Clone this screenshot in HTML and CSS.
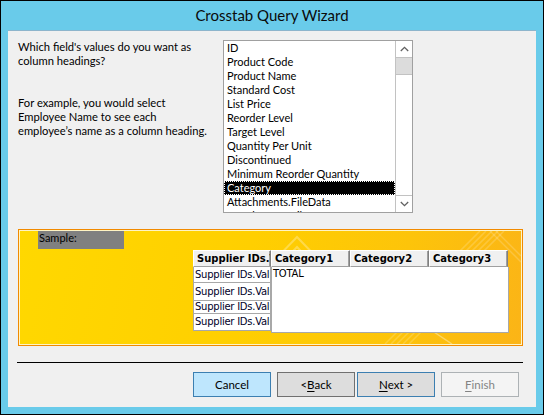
FILE: index.html
```html
<!DOCTYPE html>
<html>
<head>
<meta charset="utf-8">
<title>Crosstab Query Wizard</title>
<link rel="stylesheet" href="styles.css">
</head>
<body>
<div class="window">
  <div class="titlebar">Crosstab Query Wizard</div>
  <div class="client">
    <div class="top">
      <div class="prompt">
        <p class="q">Which field's values do you want as<br>column headings?</p>
        <p class="ex">For example, you would select<br>Employee Name to see each<br>employee’s name as a column heading.</p>
      </div>
      <div class="listbox">
        <ul class="items">
          <li>ID</li>
          <li>Product Code</li>
          <li>Product Name</li>
          <li>Standard Cost</li>
          <li>List Price</li>
          <li>Reorder Level</li>
          <li>Target Level</li>
          <li>Quantity Per Unit</li>
          <li>Discontinued</li>
          <li>Minimum Reorder Quantity</li>
          <li class="sel">Category</li>
          <li>Attachments.FileData</li>
          <li>Attachments.FileName</li>
        </ul>
        <div class="vscroll">
          <div class="sbtn"><svg width="9" height="6" viewBox="0 0 9 6"><polyline points="0.8,5 4.5,1.3 8.2,5" fill="none" stroke="#606060" stroke-width="1.3"/></svg></div>
          <div class="track"><div class="thumb"></div></div>
          <div class="sbtn"><svg width="9" height="6" viewBox="0 0 9 6"><polyline points="0.8,1 4.5,4.7 8.2,1" fill="none" stroke="#606060" stroke-width="1.3"/></svg></div>
        </div>
      </div>
    </div>
    <div class="sample">
      <svg class="deco" width="501" height="113" viewBox="0 0 501 113">
        <g fill="none" stroke="#fff" stroke-opacity="0.28" stroke-width="2">
          <polyline points="248,36 277,6 306,36"/>
          <polyline points="256,38 277,16 298,38"/>
        </g>
        <g stroke="#fff" stroke-opacity="0.18" stroke-width="1.5">
          <line x1="420" y1="40" x2="460" y2="0"/>
          <line x1="426" y1="40" x2="466" y2="0"/>
          <line x1="432" y1="40" x2="472" y2="0"/>
          <line x1="438" y1="40" x2="478" y2="0"/>
          <line x1="444" y1="40" x2="484" y2="0"/>
          <line x1="470" y1="0" x2="501" y2="31"/>
          <line x1="476" y1="0" x2="501" y2="25"/>
          <line x1="365" y1="113" x2="385" y2="93"/>
          <line x1="371" y1="113" x2="391" y2="93"/>
          <line x1="377" y1="113" x2="397" y2="93"/>
          <line x1="383" y1="113" x2="403" y2="93"/>
          <line x1="389" y1="113" x2="409" y2="93"/>
        </g>
        <line x1="432" y1="113" x2="405" y2="95" stroke="#fff" stroke-opacity="0.35" stroke-width="1.5"/>
      </svg>
      <div class="slabel">Sample:</div>
      <div class="grid">
        <div class="col-left">
          <div class="hcell">Supplier IDs.Value</div>
          <div class="lrows">
            <div class="lrow r1">Supplier IDs.Value</div>
            <div class="lrow r2">Supplier IDs.Value</div>
            <div class="lrow r3">Supplier IDs.Value</div>
            <div class="lrow r4">Supplier IDs.Value</div>
          </div>
        </div>
        <div class="col-right">
          <div class="hrow">
            <div class="hcell cat">Category1</div>
            <div class="hcell cat">Category2</div>
            <div class="hcell cat">Category3</div>
          </div>
          <div class="rbody">TOTAL</div>
        </div>
      </div>
    </div>
    <div class="sep"></div>
    <div class="buttons">
      <div class="btn cancel">Cancel</div>
      <div class="btn back">&lt; <u>B</u>ack</div>
      <div class="btn next"><u>N</u>ext &gt;</div>
      <div class="btn finish"><u>F</u>inish</div>
    </div>
  </div>
</div>
</body>
</html>
```
FILE: styles.css
```css
html, body {
  margin: 0;
  padding: 0;
}
body {
  width: 544px;
  height: 415px;
  overflow: hidden;
  font-family: Lato, "Liberation Sans", sans-serif;
  font-size: 11px;
  color: #000;
}
.window {
  box-sizing: border-box;
  width: 544px;
  height: 415px;
  border: 1px solid #000;
  background: #69cbea;
  padding: 0 7px 7px 7px;
  display: flex;
  flex-direction: column;
}
.titlebar {
  height: 29px;
  line-height: 28px;
  text-align: center;
  font-size: 15px;
  color: #0a0a0a;
  flex: none;
}
.client {
  flex: 1;
  background: #f0f0f0;
  border-top: 1px solid #8db5cc;
}
.top {
  display: flex;
  padding-top: 9px;
}
.prompt {
  width: 215px;
  flex: none;
  padding-left: 10px;
  box-sizing: border-box;
  font-size: 11.2px;
  white-space: nowrap;
}
.prompt p {
  margin: 0;
  line-height: 14px;
}
.prompt .ex {
  margin-top: 28px;
}
.listbox {
  width: 190px;
  height: 173px;
  flex: none;
  box-sizing: border-box;
  border: 1px solid #a0a0a0;
  background: #fff;
  display: flex;
  overflow: hidden;
}
.items {
  list-style: none;
  margin: 0;
  padding: 0;
  width: 171px;
  flex: none;
}
.items li {
  height: 14px;
  line-height: 14px;
  padding-left: 3px;
  white-space: nowrap;
  overflow: hidden;
}
.items li.sel {
  background: #000;
  color: #fff;
  outline: 1px dotted #fff;
  outline-offset: -1px;
}
.vscroll {
  width: 17px;
  flex: none;
  display: flex;
  flex-direction: column;
  border-left: 1px solid #c2c2c2;
  box-sizing: border-box;
}
.sbtn {
  height: 17px;
  flex: none;
  display: flex;
  align-items: center;
  justify-content: center;
  background: #fff;
  border-bottom: 1px solid #c2c2c2;
  box-sizing: border-box;
}
.sbtn:last-child {
  border-bottom: none;
  border-top: 1px solid #c2c2c2;
}
.track {
  flex: 1;
  background: #fff;
}
.thumb {
  height: 17px;
  background: #dcdcdc;
  border-bottom: 1px solid #c2c2c2;
  box-sizing: border-box;
}
.sample {
  position: relative;
  margin: 16px 0 0 10px;
  width: 505px;
  height: 117px;
  box-sizing: border-box;
  border: 1px solid #f18a00;
  padding: 1px;
  box-shadow: inset 0 0 0 1px #fff4c4;
  background: linear-gradient(100deg, #ffd800 0%, #ffcf00 45%, #fdc40a 75%, #fbb417 100%);
  overflow: hidden;
}
.deco {
  position: absolute;
  left: 1px;
  top: 1px;
}
.slabel {
  position: relative;
  margin-left: 18px;
  width: 86px;
  height: 18px;
  background: #808080;
  line-height: 14px;
  padding-left: 1px;
  box-sizing: border-box;
}
.grid {
  position: relative;
  display: flex;
  margin-left: 173px;
  margin-top: 1px;
  font-family: "DejaVu Sans", sans-serif;
  font-size: 10px;
}
.col-left {
  width: 78px;
}
.hcell {
  height: 17px;
  box-sizing: border-box;
  background: #f0f0f0;
  border-top: 1px solid #fff;
  border-left: 1px solid #fff;
  border-right: 1px solid #808080;
  border-bottom: 1px solid #a0a0a0;
  box-shadow: inset -1px 0 0 #a0a0a0;
  font-weight: bold;
  white-space: nowrap;
  overflow: hidden;
  padding-left: 3px;
  line-height: 15px;
}
.lrows {
  background: #fff;
  border-left: 1px solid #a8a8a8;
  border-right: 1px solid #a8a8a8;
}
.lrow {
  box-sizing: border-box;
  border-bottom: 1px solid #a8a8a8;
  white-space: nowrap;
  overflow: hidden;
  padding-left: 1px;
  color: #000028;
  letter-spacing: -0.25px;
}
.r1 { height: 16px; line-height: 15px; }
.r2 { height: 18px; line-height: 17px; }
.r3 { height: 13px; line-height: 12px; }
.r4 { height: 17px; line-height: 16px; }
.col-right {
  width: 238px;
}
.hrow {
  display: flex;
}
.hcell.cat {
  width: 79px;
}
.rbody {
  height: 66px;
  box-sizing: border-box;
  background: #fff;
  border: 1px solid #a8a8a8;
  border-top: none;
  padding-left: 1px;
  line-height: 14px;
  letter-spacing: -0.25px;
}
.sep {
  margin: 16px 0 0 9px;
  width: 506px;
  height: 1px;
  background: #000;
}
.buttons {
  display: flex;
  margin: 9px 0 0 185px;
}
.btn {
  width: 78px;
  height: 25px;
  box-sizing: border-box;
  border: 1px solid #707070;
  background: #dddddd;
  display: flex;
  align-items: center;
  justify-content: center;
  font-size: 11.5px;
}
.btn u {
  text-underline-offset: 2px;
}
.cancel {
  background: #bee6fd;
  border-color: #3c7fb1;
}
.back {
  margin-left: 6px;
}
.next {
  margin-left: 2px;
  border-color: #3c7fb1;
}
.finish {
  margin-left: 6px;
  background: #f4f4f4;
  border-color: #adb2b5;
  color: #838383;
}
```
